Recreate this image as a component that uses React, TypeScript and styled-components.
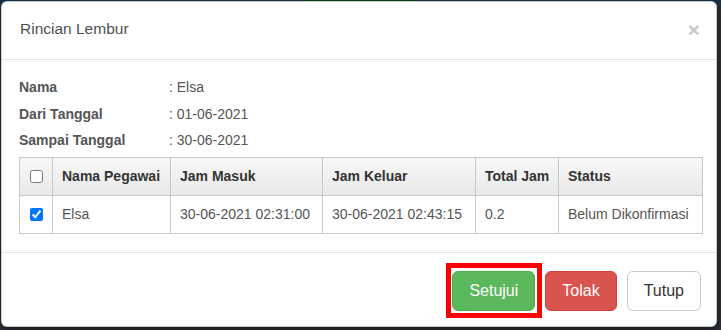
import React from 'react';
import styled, { createGlobalStyle } from 'styled-components';

const GlobalStyle = createGlobalStyle`
    html, body {
        margin: 0;
        padding: 0;
        background: #2a3138;
    }
    body {
        font-family: "Liberation Sans", Arial, sans-serif;
        font-size: 14px;
        color: #555;
    }
`;

const Backdrop = styled.div`
    min-height: 330px;
    box-sizing: border-box;
    padding: 1px 4px 3px 1px;
    background: linear-gradient(90deg, #0f3350 0 42%, #0b4512 42% 58%, #0f3350 58%) top / 100% 2px no-repeat,
        #2a3138;
`;

const Modal = styled.div`
    width: 716px;
    box-sizing: border-box;
    background: #fff;
    border: 1px solid rgba(0, 0, 0, 0.2);
    border-radius: 6px;
    box-shadow: 0 3px 9px rgba(0, 0, 0, 0.5);
    overflow: hidden;
`;

const Header = styled.div`
    display: flex;
    align-items: center;
    justify-content: space-between;
    padding: 13px 16px 16px 18px;
    border-bottom: 1px solid #e5e5e5;
`;

const Title = styled.h4`
    margin: 0;
    font-size: 15.5px;
    font-weight: 400;
    line-height: 28px;
    color: #505050;
`;

const Close = styled.button`
    border: 0;
    background: none;
    padding: 0;
    font-family: "Liberation Sans", Arial, sans-serif;
    font-size: 21px;
    font-weight: 700;
    line-height: 1;
    color: #c8c8c8;
    cursor: pointer;
`;

const Body = styled.div`
    padding: 14px 14px 18px 17px;
`;

const InfoRow = styled.div`
    display: flex;
    line-height: 26.5px;
`;

const InfoLabel = styled.span`
    width: 150px;
    font-weight: 700;
    color: #555;
`;

const InfoValue = styled.span`
    color: #555;
`;

const Table = styled.table`
    width: 683px;
    margin-top: 3.5px;
    border-collapse: collapse;
    table-layout: fixed;
`;

const Cell = styled.td<{ $center?: boolean }>`
    border: 1px solid #c4c9cc;
    padding: ${({ $center }) => ($center ? '8px 0 9px' : '8px 8px 9px 9px')};
    line-height: 20px;
    text-align: ${({ $center }) => ($center ? 'center' : 'left')};
    vertical-align: middle;
    white-space: nowrap;
    overflow: hidden;
    color: #555;
`;

const HeadCell = styled(Cell).attrs({ as: 'th' })`
    font-weight: 700;
    color: #333;
`;

const HeadRow = styled.tr`
    background: linear-gradient(#f8f8f8, #e8e8e8);
`;

const Check = styled.input`
    display: block;
    margin: 0 auto;
    width: 13px;
    height: 13px;
`;

const Footer = styled.div`
    display: flex;
    justify-content: flex-end;
    gap: 10px;
    padding: 18px 15px 15px;
    border-top: 1px solid #e5e5e5;
`;

/* the red box drawn over the approve button in the screenshot */
const Marked = styled.span`
    position: relative;
    display: inline-flex;

    &::after {
        content: '';
        position: absolute;
        top: -8px;
        right: -7px;
        bottom: -7px;
        left: -6px;
        border: 5px solid #f00;
        pointer-events: none;
    }
`;

const Button = styled.button<{ $variant: 'success' | 'danger' | 'default' }>`
    font-family: "Liberation Sans", Arial, sans-serif;
    font-size: 16px;
    line-height: 18px;
    padding: 10px 16px;
    border-radius: 6px;
    border: 1px solid
        ${({ $variant }) => ($variant === 'success' ? '#4cae4c' : $variant === 'danger' ? '#d43f3a' : '#ccc')};
    background: ${({ $variant }) =>
        $variant === 'success' ? '#5cb85c' : $variant === 'danger' ? '#d9534f' : '#fff'};
    color: ${({ $variant }) => ($variant === 'default' ? '#333' : '#fff')};
    cursor: pointer;
`;

const columns = [33, 118, 152, 153, 83, 144];

export default function App() {
    return (
        <>
            <GlobalStyle />
            <Backdrop>
                <Modal>
                    <Header>
                        <Title>Rincian Lembur</Title>
                        <Close aria-label="Close">×</Close>
                    </Header>
                    <Body>
                        <InfoRow>
                            <InfoLabel>Nama</InfoLabel>
                            <InfoValue>: Elsa</InfoValue>
                        </InfoRow>
                        <InfoRow>
                            <InfoLabel>Dari Tanggal</InfoLabel>
                            <InfoValue>: 01-06-2021</InfoValue>
                        </InfoRow>
                        <InfoRow>
                            <InfoLabel>Sampai Tanggal</InfoLabel>
                            <InfoValue>: 30-06-2021</InfoValue>
                        </InfoRow>
                        <Table>
                            <colgroup>
                                {columns.map((w, i) => (
                                    <col key={i} style={{ width: w }} />
                                ))}
                            </colgroup>
                            <thead>
                                <HeadRow>
                                    <HeadCell $center>
                                        <Check type="checkbox" readOnly />
                                    </HeadCell>
                                    <HeadCell>Nama Pegawai</HeadCell>
                                    <HeadCell>Jam Masuk</HeadCell>
                                    <HeadCell>Jam Keluar</HeadCell>
                                    <HeadCell>Total Jam</HeadCell>
                                    <HeadCell>Status</HeadCell>
                                </HeadRow>
                            </thead>
                            <tbody>
                                <tr>
                                    <Cell $center>
                                        <Check type="checkbox" defaultChecked />
                                    </Cell>
                                    <Cell>Elsa</Cell>
                                    <Cell>30-06-2021 02:31:00</Cell>
                                    <Cell>30-06-2021 02:43:15</Cell>
                                    <Cell>0.2</Cell>
                                    <Cell>Belum Dikonfirmasi</Cell>
                                </tr>
                            </tbody>
                        </Table>
                    </Body>
                    <Footer>
                        <Marked>
                            <Button $variant="success">Setujui</Button>
                        </Marked>
                        <Button $variant="danger">Tolak</Button>
                        <Button $variant="default">Tutup</Button>
                    </Footer>
                </Modal>
            </Backdrop>
        </>
    );
}
